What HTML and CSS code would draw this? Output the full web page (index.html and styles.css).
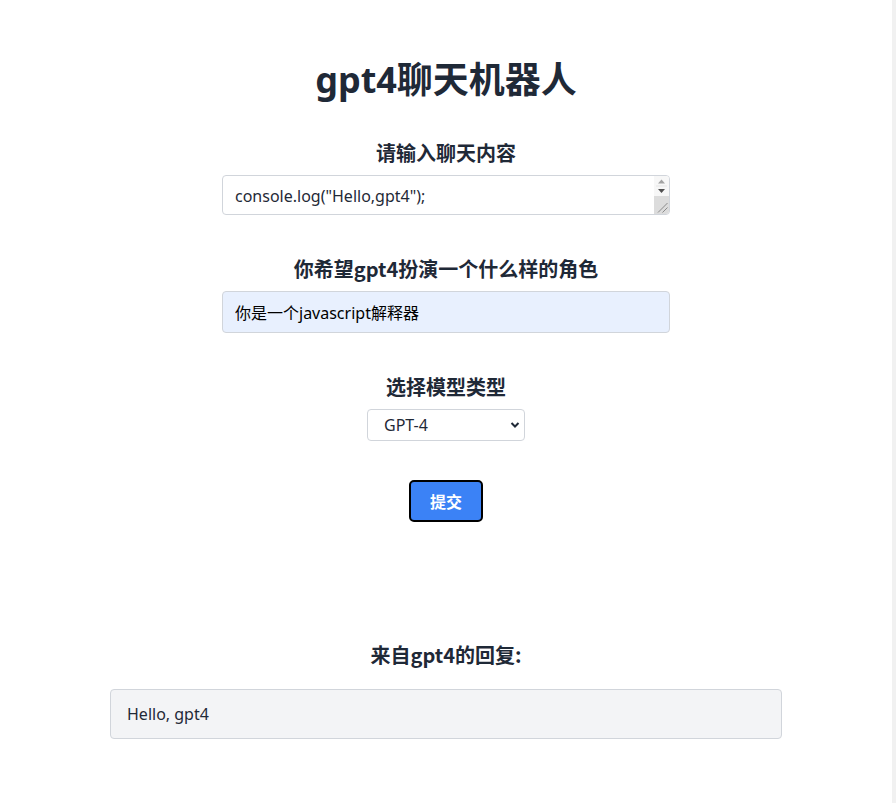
FILE: index.html
```html
<!DOCTYPE html>
<html lang="zh-CN">
<head>
<meta charset="utf-8">
<title>gpt4聊天机器人</title>
<link rel="stylesheet" href="styles.css">
</head>
<body>
<main class="page">
  <h1 class="title">gpt4聊天机器人</h1>
  <form class="form">
    <div class="group">
      <label class="label" for="msg">请输入聊天内容</label>
      <div class="ta-wrap">
        <textarea id="msg" class="textarea" rows="1">console.log("Hello,gpt4");
</textarea>
        <div class="fake-scroll" aria-hidden="true">
          <div class="fs-arrows">
            <svg width="15" height="20" viewBox="0 0 15 20">
              <path d="M4 7.5 L7.5 3.5 L11 7.5 Z" fill="#a3a3a3"/>
              <rect x="2" y="9.5" width="11" height="1" fill="#e6e6e6"/>
              <path d="M4 13 L11 13 L7.5 17 Z" fill="#505050"/>
            </svg>
          </div>
          <div class="fs-corner">
            <svg width="15" height="18" viewBox="0 0 15 18">
              <path d="M4 16.5 L13.5 7" stroke="#8a8a8a" stroke-width="1"/>
              <path d="M8.5 16.5 L13.5 11.5" stroke="#8a8a8a" stroke-width="1"/>
            </svg>
          </div>
        </div>
      </div>
    </div>
    <div class="group">
      <label class="label" for="role">你希望gpt4扮演一个什么样的角色</label>
      <input id="role" class="input" type="text" value="你是一个javascript解释器">
    </div>
    <div class="group">
      <label class="label" for="model">选择模型类型</label>
      <div class="select-wrap">
        <select id="model" class="select">
          <option>GPT-4</option>
          <option>GPT-3.5</option>
        </select>
        <svg class="chev" width="10" height="8" viewBox="0 0 10 8"><path d="M1.5 2 L5 5.5 L8.5 2" fill="none" stroke="#1f2937" stroke-width="2"/></svg>
      </div>
    </div>
    <button type="button" class="btn">提交</button>
  </form>
  <section class="reply">
    <h2 class="label">来自gpt4的回复:</h2>
    <div class="reply-box">Hello, gpt4</div>
  </section>
</main>
</body>
</html>
```
FILE: styles.css
```css
* { box-sizing: border-box; }
html, body { margin: 0; padding: 0; background: #fff; }
body {
  font-family: "Noto Sans", "Noto Sans CJK SC", sans-serif;
  color: #1f2937;
  border-right: 4px solid #f1f1f1;
  min-height: 803px;
}
.page {
  display: flex;
  flex-direction: column;
  align-items: center;
  padding-top: 60px;
}
.title {
  margin: 0;
  font-family: "Noto Sans", "Noto Sans CJK SC", sans-serif;
  font-size: 36px;
  line-height: 40px;
  font-weight: 700;
  color: #1f2937;
}
.form {
  display: flex;
  flex-direction: column;
  align-items: center;
  margin-top: 39px;
  width: 448px;
}
.group {
  width: 100%;
  display: flex;
  flex-direction: column;
  align-items: center;
  gap: 8px;
  margin-bottom: 40px;
}
.group:nth-child(3) { margin-bottom: 39px; }
.label {
  margin: 0;
  font-size: 20px;
  line-height: 28px;
  font-weight: 700;
  color: #1f2937;
  font-family: "Noto Sans CJK SC", sans-serif;
}
.ta-wrap {
  position: relative;
  width: 448px;
  height: 40px;
}
.textarea {
  display: block;
  width: 448px;
  height: 40px;
  padding: 8px 28px 6px 12px;
  border: 1px solid #d1d5db;
  border-radius: 4px;
  font-family: "Noto Sans", "Noto Sans CJK SC", sans-serif;
  font-size: 16px;
  line-height: 24px;
  color: #1f2937;
  background: #fff;
  overflow: hidden;
  resize: none;
}
.fake-scroll {
  position: absolute;
  top: 1px;
  right: 1px;
  width: 15px;
  height: 38px;
  display: flex;
  flex-direction: column;
  border-radius: 0 3px 3px 0;
  overflow: hidden;
}
.fs-arrows {
  height: 20px;
  background: #f7f7f7;
  line-height: 0;
}
.fs-corner {
  height: 18px;
  background: #dcdcdc;
  line-height: 0;
}
.input {
  display: block;
  width: 448px;
  height: 42px;
  padding: 0 12px;
  border: 1px solid #d1d5db;
  border-radius: 4px;
  background: #e8f0fe;
  font-family: "Noto Sans", "Noto Sans CJK SC", sans-serif;
  font-size: 16px;
  color: #000;
}
.select-wrap {
  position: relative;
  width: 158px;
}
.select {
  display: block;
  width: 158px;
  height: 32px;
  padding: 0 16px;
  border: 1px solid #d1d5db;
  border-radius: 4px;
  background: #fff;
  font-family: "Noto Sans", "Noto Sans CJK SC", sans-serif;
  font-size: 16px;
  color: #1f2937;
  appearance: none;
  -webkit-appearance: none;
}
.chev {
  position: absolute;
  right: 5px;
  top: 12px;
  pointer-events: none;
}
.btn {
  width: 74px;
  height: 42px;
  border: 2px solid #000;
  border-radius: 5px;
  background: #3b82f6;
  color: #fff;
  font-family: "Noto Sans CJK SC", sans-serif;
  font-size: 16px;
  font-weight: 700;
  padding: 0;
}
.reply {
  margin-top: 119px;
  display: flex;
  flex-direction: column;
  align-items: center;
  gap: 20px;
}
.reply-box {
  width: 672px;
  height: 50px;
  padding: 0 16px;
  display: flex;
  align-items: center;
  background: #f3f4f6;
  border: 1px solid #d1d5db;
  border-radius: 4px;
  font-family: "Noto Sans", "Liberation Sans", sans-serif;
  font-size: 16px;
  color: #1f2937;
}
```
